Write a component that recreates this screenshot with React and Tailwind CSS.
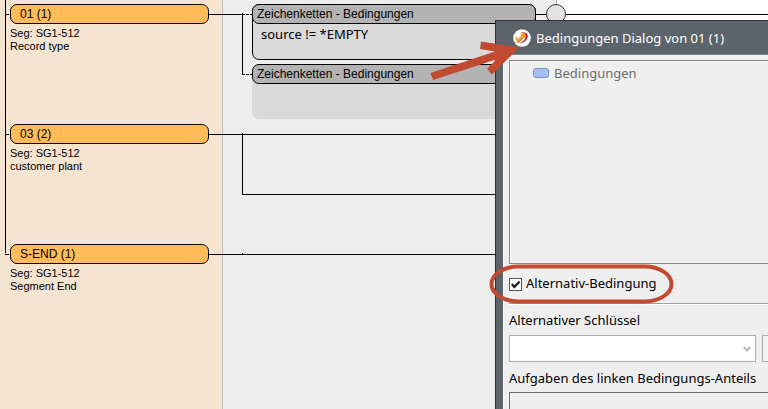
import React, { useState } from 'react';

const SEGMENTS = [
  { name: '01 (1)',    seg: 'SG1-512', description: 'Record type' },
  { name: '03 (2)',    seg: 'SG1-512', description: 'customer plant' },
  { name: 'S-END (1)', seg: 'SG1-512', description: 'Segment End' },
];

function SegmentNode({ name, seg, description }) {
  return (
    <div className="h-[120px] pl-[10px] pr-[13px]">
      <button className="block h-5 w-full rounded-[7px] border border-black bg-[#ffbc59] pl-[9px] text-left text-[12px] leading-[18px]">
        {name}
      </button>
      <p className="mt-[3px] text-[11px] leading-[13px]">Seg: {seg}</p>
      <p className="text-[11px] leading-[13px]">{description}</p>
    </div>
  );
}

function ConditionHeader({ children }) {
  return (
    <div className="h-5 rounded-[7px] border border-black bg-[#b3b3b3] pl-1 text-[12px] leading-[18px]">
      {children}
    </div>
  );
}

// Lines between the segment tree and the condition boxes
function Connectors() {
  return (
    <svg className="pointer-events-none absolute inset-0 h-full w-full" stroke="#000" fill="none" shapeRendering="crispEdges">
      <path d="M5.5 0V253M5 14.5h4M5 134.5h4M5 254.5h4" />
      <path d="M209 14.5h34M242.5 13V74.5M536 14.5H2000" />
      <path d="M242 14.5h10M242 74.5h10" strokeDasharray="3 1" />
      <path d="M209 134.5H2000M242.5 133V194.5H2000" />
      <path d="M209 254.5H2000M242.5 253v2" />
      <path d="M556.5 0v5" stroke="#b4b4b4" />
      <circle cx="556" cy="14" r="9.5" fill="#e3e3e3" stroke="#333" shapeRendering="auto" />
    </svg>
  );
}

function AppLogo() {
  return (
    <svg viewBox="0 0 18 18" className="h-[18px] w-[18px] shrink-0">
      <circle cx="9" cy="9" r="8.8" fill="#fff" />
      <path d="M7.4 3.6C11 2.4 14.6 3.6 14.8 6.8C15 10.6 11 14.2 6 14.6C9.6 13 12.8 10.2 12.6 7C12.4 4.8 10 3.8 7.4 3.6Z" fill="#b8232b" />
      <path d="M3 8L4.6 12.2L11 5.2M7.6 5.6L11.2 5L11 8.6" fill="none" stroke="#f0a020" strokeWidth="1.8" />
      <path d="M5 13.6L11.4 7.4" fill="none" stroke="#d8571f" strokeWidth="1.2" />
    </svg>
  );
}

function ConditionsDialog() {
  const [alternative, setAlternative] = useState(true);

  return (
    <section
      role="dialog"
      aria-labelledby="dialog-title"
      className="absolute -right-4 bottom-0 left-[495px] top-5 flex flex-col overflow-hidden border-l border-t border-[#2c3236] bg-[#5b646a] font-['Noto_Sans','Open_Sans',sans-serif] text-[13px]"
    >
      <header className="flex h-[33px] shrink-0 items-center gap-[5px] pl-[17px] text-white">
        <AppLogo />
        <h2 id="dialog-title" className="leading-5">Bedingungen Dialog von 01 (1)</h2>
      </header>

      <div className="ml-[7px] flex flex-1 flex-col border-l border-t border-t-[#7c8b98] border-l-[#f8f8f8] bg-[#efefef] pl-[5px] pt-[5px]">
        <div className="h-[204px] shrink-0 border border-[#828790] pl-[23px] pt-[2px] shadow-[inset_1px_1px_0_#fff]">
          <div className="flex items-center gap-[5px] text-[#6d6d6d]">
            <span className="h-[10px] w-4 rounded-[3px] border border-[#7f93bd] bg-[#a6bff5]" />
            <span className="leading-5">Bedingungen</span>
          </div>
        </div>

        <label className="mt-[10px] flex h-5 items-center gap-1">
          <span className="relative h-[13px] w-[13px]">
            <input
              type="checkbox"
              checked={alternative}
              onChange={(e) => setAlternative(e.target.checked)}
              className="peer block h-[13px] w-[13px] appearance-none border border-[#555] bg-white"
            />
            <svg viewBox="0 0 13 13" className="pointer-events-none absolute inset-0 hidden peer-checked:block">
              <path d="M2.8 6L5.3 9L10.5 3.4" fill="none" stroke="#1a1a1a" strokeWidth="2.2" />
            </svg>
          </span>
          Alternativ-Bedingung
        </label>

        <hr className="mt-[9px] border-t border-[#a0a0a0] shadow-[0_1px_0_#fff]" />

        <label htmlFor="alt-key" className="mt-[6px] leading-5">Alternativer Schlüssel</label>
        <div className="mt-[5px] flex gap-[6px]">
          <div className="relative w-[247px] shrink-0">
            <select id="alt-key" className="block h-[27px] w-full appearance-none border border-[#abadb3] bg-white px-1">
              <option value="" />
            </select>
            <svg viewBox="0 0 8 7" className="pointer-events-none absolute right-[5px] top-[11px] h-[7px] w-2">
              <path d="M0.7 1L4 4.6L7.3 1" fill="none" stroke="#b4b4b4" strokeWidth="2" />
            </svg>
          </div>
          <button aria-label="Schlüssel bearbeiten" className="h-[27px] w-7 shrink-0 border border-[#abadb3] bg-[#f4f4f4]" />
        </div>

        <p className="mt-[6px] leading-5">Aufgaben des linken Bedingungs-Anteils</p>
        <div className="mt-1 flex-1 border border-b-0 border-[#6b6b6b]" />
      </div>
    </section>
  );
}

// Red arrow and ring that point out the dialog and its option
function Annotations() {
  return (
    <svg className="pointer-events-none absolute inset-0 h-full w-full">
      <path d="M430.5 73L495 51.5L480 49L481 41.5L519.5 47.5L492 74.5L487 69L496 59.5L433 80Z" fill="#c14a31" />
      <rect x="491.5" y="266.5" width="180" height="35" rx="27" ry="17.5" fill="none" stroke="#c14a31" strokeWidth="4" />
    </svg>
  );
}

export default function App() {
  return (
    <div className="relative flex h-screen overflow-hidden bg-[#eee] font-['Liberation_Sans',Arial,sans-serif] text-black">
      <aside className="w-[223px] shrink-0 border-r border-[#bbb] bg-[#f5e4d0] pt-1">
        {SEGMENTS.map((s) => (
          <SegmentNode key={s.name} {...s} />
        ))}
      </aside>

      <main className="flex flex-1 pl-[29px]">
        <div className="w-[284px] shrink-0 pt-1">
          <div className="h-14 rounded-[7px] border border-black bg-[#d9d9d9]">
            <div className="-mx-px -mt-px">
              <ConditionHeader>Zeichenketten - Bedingungen</ConditionHeader>
            </div>
            <p className="pl-2 font-['Noto_Sans','Open_Sans',sans-serif] text-[13px] leading-5">source != *EMPTY</p>
          </div>
          <div className="mt-1 h-[55px] rounded-[7px] bg-[#d9d9d9]">
            <ConditionHeader>Zeichenketten - Bedingungen</ConditionHeader>
          </div>
        </div>
        <div className="ml-5 flex-1 bg-white" />
      </main>

      <Connectors />
      <ConditionsDialog />
      <Annotations />
    </div>
  );
}
